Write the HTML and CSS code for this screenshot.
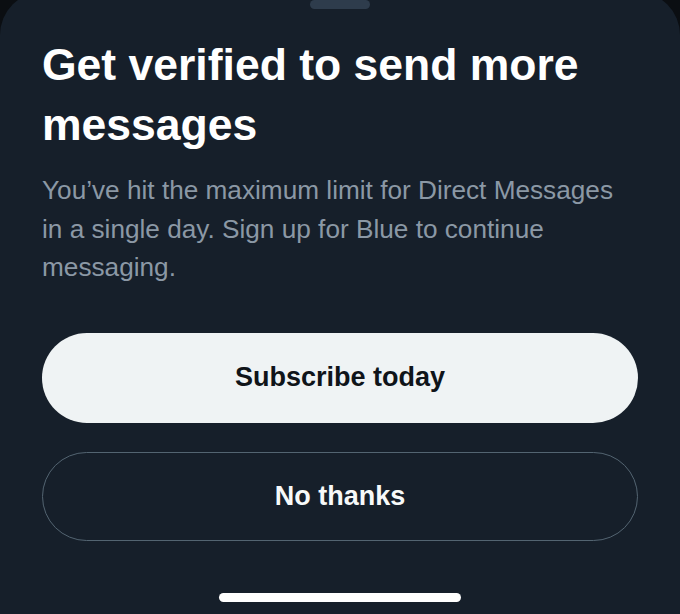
FILE: index.html
```html
<!DOCTYPE html>
<html lang="en">
  <head>
    <meta charset="UTF-8" />
    <meta name="viewport" content="width=device-width, initial-scale=1.0" />
    <title>Get verified</title>
    <link rel="stylesheet" href="styles.css">
  </head>
  <body>
    <section class="sheet">
      <div class="grabber"></div>

      <h1 class="sheet-title">Get verified to send more messages</h1>
      <p class="sheet-text">
        You’ve hit the maximum limit for Direct Messages in a single day. Sign up for Blue to continue messaging.
      </p>

      <button class="btn btn-primary">Subscribe today</button>
      <button class="btn btn-outline">No thanks</button>

      <div class="home-bar"></div>
    </section>
  </body>
</html>
```

FILE: styles.css
```css
* {
  margin: 0;
  padding: 0;
  box-sizing: border-box;
}

body {
  height: 100vh;
  overflow: hidden;
  background-color: #0b0e12;
  font-family: "Liberation Sans", Arial, sans-serif;
}

.sheet {
  margin-top: -8px;
  min-height: calc(100vh + 8px);
  background-color: #161f2a;
  border-radius: 43px 43px 0 0;
  padding: 0 42px;
  display: flex;
  flex-direction: column;
}

.grabber {
  width: 60px;
  height: 9px;
  margin: 8px auto 0;
  border-radius: 5px;
  background-color: #2e3c4c;
}

.sheet-title {
  margin-top: 26px;
  font-size: 44.5px;
  line-height: 60px;
  font-weight: 700;
  color: #ffffff;
}

.sheet-text {
  margin-top: 16px;
  max-width: 585px;
  font-size: 26.2px;
  line-height: 38.5px;
  color: #8b98a5;
}

.btn {
  width: 100%;
  border-radius: 45px;
  font-family: "Liberation Sans", Arial, sans-serif;
  font-size: 27px;
  font-weight: 700;
  cursor: pointer;
}

.btn-primary {
  margin-top: 46px;
  height: 90px;
  border: none;
  background-color: #eff3f4;
  color: #0f1419;
}

.btn-outline {
  margin-top: 29px;
  height: 89px;
  border: 1.5px solid #536471;
  background-color: transparent;
  color: #f7f9f9;
}

.home-bar {
  width: 242px;
  height: 9px;
  margin: 52px auto 0;
  border-radius: 5px;
  background-color: #ffffff;
}
```
